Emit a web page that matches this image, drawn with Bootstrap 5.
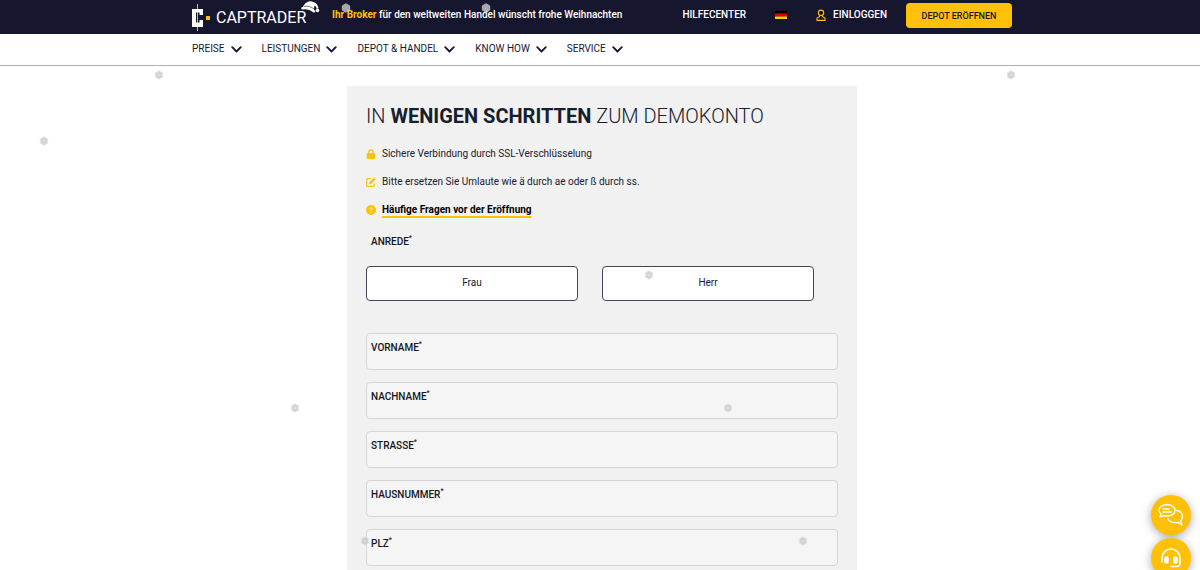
<!DOCTYPE html>
<html lang="de">
<head>
<meta charset="utf-8">
<meta name="viewport" content="width=device-width, initial-scale=1">
<title>CapTrader – Demokonto</title>
<link href="https://cdn.jsdelivr.net/npm/bootstrap@5.3.0/dist/css/bootstrap.min.css" rel="stylesheet">
<style>
  :root { --ink: #17162f; --gold: #ffc107; }
  body { font-family: Roboto, "Liberation Sans", sans-serif; font-size: 10px; line-height: 16px; color: #16202c; background: #fff; }
  .page-wrap { max-width: 820px; margin: 0 auto; }
  .topbar { background: var(--ink); min-height: 34px; }
  .topbar a { color: #fff; }
  .logo-link { margin-right: 8px; }
  .logo-link svg { display: block; }
  .slogan { color: #fff; font-weight: 500; padding-top: 7px; }
  .slogan b { color: var(--gold); font-weight: 700; }
  .top-links { font-weight: 500; padding-top: 3px; }
  .top-links a { margin-top: 4px; }
  .lang { margin: 0 29px; }
  .login { gap: 7px; margin-right: 19px; }
  .flag { width: 12px; height: 8px; }
  .btn-open, .btn-open:hover { background: var(--gold); color: var(--ink); }
  .btn-open { width: 106px; height: 25px; font-size: 9px; line-height: 12px; font-weight: 500; border-radius: 4px; }
  .mainnav { min-height: 32px; border-bottom: 1px solid #b1b0b8; }
  .menu-row { gap: 20px; padding-top: 6px; }
  .menu-btn { gap: 6px; font-size: 10px; line-height: 18px; color: var(--ink); }
  .form-panel { max-width: 510px; margin: 20px auto 0; background: #f1f1f1; padding: 16px 19px 5px; }
  h1 { font-size: 20px; line-height: 28px; font-weight: 300; margin-bottom: 16px; }
  .hint { min-height: 16px; gap: 6px; margin-bottom: 12px; }
  .faq { color: #000; font-weight: 700; text-decoration: underline var(--gold) 2px; text-underline-offset: 3px; }
  .cap { font-size: 10px; line-height: 12px; font-weight: 500; color: #14161c; }
  .cap sup { font-size: 7px; top: -5px; }
  fieldset { margin-top: 18px; }
  legend.cap { margin-bottom: 18px; padding-left: 5px; }
  .choices { gap: 24px; padding-right: 24px; margin-bottom: 32px; }
  .btn-choice { height: 35px; background: #fff; border: 1px solid #45445a; border-radius: 4px; color: var(--ink); font-size: 10px; line-height: 20px; }
  .field { min-height: 37px; border: 1px solid #d6d6d6; border-radius: 4px; background: #f5f5f5; padding: 8px 4px; margin-bottom: 12px; }
  .field input { outline: 0; font-size: 10px; line-height: 14px; }
  .contact { right: 9px; bottom: -8px; gap: 3px; }
  .round-btn, .round-btn:hover { background: var(--gold); }
  .round-btn { width: 40px; height: 40px; box-shadow: 0 2px 10px rgba(0,0,0,.35); }
  .snow { inset: 0; pointer-events: none; z-index: 1050; opacity: .8; }
</style>
</head>
<body>
<svg width="0" height="0" class="position-absolute" aria-hidden="true">
  <symbol id="chev" viewBox="0 0 11 7"><path d="M1.200 1.200l4.300 4.300 4.300-4.300" fill="none" stroke="#17162f" stroke-width="1.800" stroke-linecap="round" stroke-linejoin="round"/></symbol>
  <symbol id="flake" viewBox="-5 -5 10 10"><path d="M0-4.300L3.700-2.150V2.150L0 4.300-3.700 2.150V-2.150z" fill="#d0d0d0" stroke="#e2e2e2" stroke-width=".8"/><path d="M0-3.600V3.600M-3.100-1.800L3.100 1.800M-3.100 1.800L3.100-1.800" stroke="#c2c2c2" stroke-width="1"/><circle r="1" fill="#e0e0e0"/></symbol>
</svg>

<header>
  <div class="topbar ps-1">
    <div class="page-wrap d-flex align-items-start">
      <a class="logo-link" href="#" aria-label="CapTrader">
        <svg width="132" height="34" viewBox="0 0 132 34">
          <path d="M5.500 4v27" stroke="#b9b9c6" stroke-width="1"/>
          <path d="M0 9h11v6H7.500v-2.500H4v10h3.500V20H11v7H0z" fill="#fff"/>
          <rect x="14" y="16" width="4" height="4" fill="#ffc107"/>
          <text x="24" y="23" font-size="16" fill="#fff">CAPTRADER</text>
          <path d="M111 7c1.500-4 6-7 10.500-5 3 1.200 4.800 3.500 5 6.500l-2 .3c-.3-1.800-1-2.800-2-3.200l-.8 5C118 8 115 7.200 111 7z" fill="#fff"/>
          <path d="M110.500 8.200c4.500-.7 8.500.5 11.500 3" stroke="#fff" stroke-width="2.600" stroke-linecap="round" fill="none"/>
          <path d="M112 6.300c4-.6 7 .5 10 2.600" stroke="#17162f" stroke-width=".6" fill="none"/>
          <circle cx="125.500" cy="10.500" r="1.800" fill="#fff"/>
        </svg>
      </a>
      <div class="slogan text-nowrap"><b>Ihr Broker</b> für den weltweiten Handel wünscht frohe Weihnachten</div>
      <nav class="top-links ms-auto d-flex align-items-start text-nowrap">
        <a class="text-decoration-none" href="#">HILFECENTER</a>
        <a class="lang" href="#" aria-label="Deutsch"><svg class="flag" viewBox="0 0 12 8"><path fill="#000" d="M0 0h12v3H0z"/><path fill="#e00000" d="M0 2.500h12v3H0z"/><path fill="#ffce00" d="M0 5.500h12V8H0z"/></svg></a>
        <a class="login text-decoration-none d-flex align-items-center" href="#"><svg width="10" height="12" viewBox="0 0 10 12" fill="none" stroke="#ffc107" stroke-width="1.100"><circle cx="5" cy="3.800" r="2.700"/><path d="M3.500 6.500v1.200L1 9v2.400h8V9L6.500 7.700V6.500"/></svg>EINLOGGEN</a>
        <button type="button" class="btn btn-open p-0 border-0">DEPOT ERÖFFNEN</button>
      </nav>
    </div>
  </div>
  <div class="mainnav ps-1">
    <nav class="page-wrap menu-row d-flex">
      <button type="button" class="menu-btn btn border-0 p-0 d-flex align-items-center">PREISE<svg width="11" height="7"><use href="#chev"/></svg></button>
      <button type="button" class="menu-btn btn border-0 p-0 d-flex align-items-center">LEISTUNGEN<svg width="11" height="7"><use href="#chev"/></svg></button>
      <button type="button" class="menu-btn btn border-0 p-0 d-flex align-items-center">DEPOT &amp; HANDEL<svg width="11" height="7"><use href="#chev"/></svg></button>
      <button type="button" class="menu-btn btn border-0 p-0 d-flex align-items-center">KNOW HOW<svg width="11" height="7"><use href="#chev"/></svg></button>
      <button type="button" class="menu-btn btn border-0 p-0 d-flex align-items-center">SERVICE<svg width="11" height="7"><use href="#chev"/></svg></button>
    </nav>
  </div>
</header>

<main class="ps-1">
  <form class="form-panel">
    <h1>IN <strong class="fw-bold">WENIGEN SCHRITTEN</strong> ZUM DEMOKONTO</h1>
    <div class="hint d-flex align-items-center"><svg width="10" height="10" viewBox="0 0 10 10"><path d="M1.500 4.200h7a.8.8 0 0 1 .8.8v4a1 1 0 0 1-1 1H1.700a1 1 0 0 1-1-1V5a.8.8 0 0 1 .8-.8z" fill="#ffc107"/><path d="M2.800 5V3a2.200 2.200 0 0 1 4.400 0v2" fill="none" stroke="#ffc107" stroke-width="1.300"/></svg>Sichere Verbindung durch SSL-Verschlüsselung</div>
    <div class="hint d-flex align-items-center"><svg width="10" height="10" viewBox="0 0 10 10"><path d="M5 1.700H1.600a.9.9 0 0 0-.9.9v5.800c0 .5.400.9.900.9h5.800c.5 0 .9-.4.9-.9V6.500" fill="none" stroke="#ffc107" stroke-width="1.200"/><path d="M3.300 5.200L8 .5l1.700 1.700L5 6.900l-2 .3z" fill="#ffc107"/></svg>Bitte ersetzen Sie Umlaute wie ä durch ae oder ß durch ss.</div>
    <div class="hint d-flex align-items-center"><svg width="10" height="10" viewBox="0 0 10 10"><circle cx="5" cy="5" r="5" fill="#ffc107"/><path d="M3.600 3.900C3.700 2.300 6.400 2.400 6.300 4c0 .9-1.300.9-1.300 1.900M5 6.900v1" fill="none" stroke="#f6efd6" stroke-width="1"/></svg><a class="faq" href="#">Häufige Fragen vor der Eröffnung</a></div>
    <fieldset>
      <legend class="cap float-none">ANREDE<sup>*</sup></legend>
      <div class="choices d-flex">
        <input class="btn-check" type="radio" name="anrede" id="frau"><label class="btn btn-choice flex-fill w-50" for="frau">Frau</label>
        <input class="btn-check" type="radio" name="anrede" id="herr"><label class="btn btn-choice flex-fill w-50" for="herr">Herr</label>
      </div>
    </fieldset>
    <div class="field d-flex align-items-start"><label class="cap" for="vorname">VORNAME<sup>*</sup></label><input class="flex-fill border-0 bg-transparent" id="vorname" type="text"></div>
    <div class="field d-flex align-items-start"><label class="cap" for="nachname">NACHNAME<sup>*</sup></label><input class="flex-fill border-0 bg-transparent" id="nachname" type="text"></div>
    <div class="field d-flex align-items-start"><label class="cap" for="strasse">STRASSE<sup>*</sup></label><input class="flex-fill border-0 bg-transparent" id="strasse" type="text"></div>
    <div class="field d-flex align-items-start"><label class="cap" for="hausnummer">HAUSNUMMER<sup>*</sup></label><input class="flex-fill border-0 bg-transparent" id="hausnummer" type="text"></div>
    <div class="field d-flex align-items-start mb-0"><label class="cap" for="plz">PLZ<sup>*</sup></label><input class="flex-fill border-0 bg-transparent" id="plz" type="text"></div>
  </form>
</main>

<div class="contact position-fixed d-flex flex-column">
  <button type="button" class="round-btn btn border-0 p-0 rounded-circle" aria-label="Chat"><svg width="28" height="28" viewBox="0 0 28 28" fill="none" stroke="#fff" stroke-width="1.300" stroke-linejoin="round" stroke-linecap="round"><path d="M10 3.500c4.700 0 8 2.600 8 5.800S14.700 15 10 15c-1.200 0-2.200-.1-3.200-.4L3 16l1.300-2.900C2.800 12 2 10.700 2 9.300c0-3.200 3.300-5.800 8-5.800zM6 8h6M6 11h8"/><path d="M19.500 9.500c3.700.7 6 3 6 5.900 0 1.700-.7 3.200-2 4.300l1.500 4.300-4-2.700c-1 .3-1.700.4-2.700.4-3.600 0-6.500-1.700-7.500-4.200"/></svg></button>
  <button type="button" class="round-btn btn border-0 p-0 rounded-circle" aria-label="Support"><svg width="24" height="24" viewBox="0 0 24 24" fill="none" stroke="#fff" stroke-width="1.600" stroke-linecap="round"><path d="M3 13v-1a9 9 0 0 1 18 0v5c0 2-1.500 3.500-3.500 3.500H14"/><rect x="6" y="11" width="3" height="6" rx="1.500" fill="#fff"/><rect x="15" y="11" width="3" height="6" rx="1.500" fill="#fff"/><path d="M3 13v3M12 20.500h2"/></svg></button>
</div>

<svg class="snow position-fixed w-100 h-100" aria-hidden="true">
  <use href="#flake" x="341" y="3" width="10" height="10"/><use href="#flake" x="481" y="3" width="10" height="10"/>
  <use href="#flake" x="154" y="70" width="10" height="10"/><use href="#flake" x="39" y="136" width="10" height="10"/>
  <use href="#flake" x="1006" y="70" width="10" height="10"/><use href="#flake" x="644" y="270" width="10" height="10"/>
  <use href="#flake" x="290" y="403" width="10" height="10"/><use href="#flake" x="723" y="403" width="10" height="10"/>
  <use href="#flake" x="360" y="536" width="10" height="10"/><use href="#flake" x="798" y="536" width="10" height="10"/>
</svg>
<script src="https://cdn.jsdelivr.net/npm/bootstrap@5.3.0/dist/js/bootstrap.bundle.min.js"></script>
</body>
</html>
